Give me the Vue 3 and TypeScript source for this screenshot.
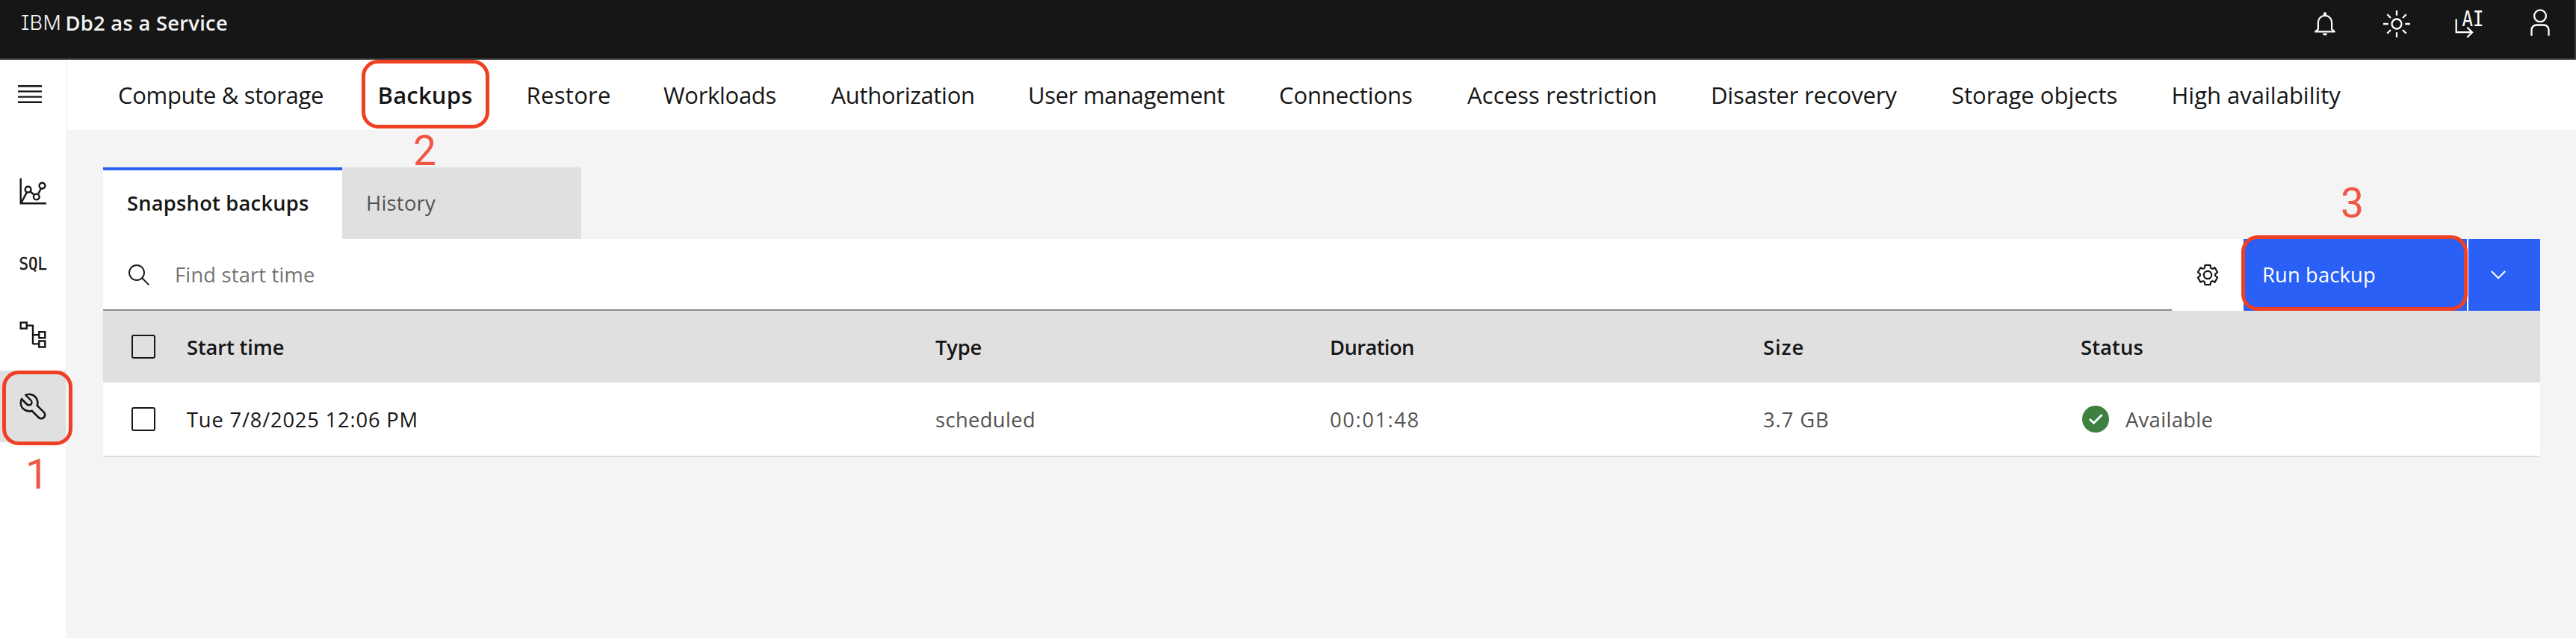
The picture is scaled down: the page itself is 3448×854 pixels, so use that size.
<script setup lang="ts">
interface NavItem {
  label: string
  width: number
  spacing: number
  active?: boolean
}

interface Cell {
  text: string
  spacing: number
}

interface BackupRow {
  start: Cell
  type: Cell
  duration: Cell
  size: Cell
  status: Cell
}

const navItems: NavItem[] = [
  { label: 'Compute & storage', width: 347.5, spacing: -0.33 },
  { label: 'Backups', width: 199, spacing: 0.2, active: true },
  { label: 'Restore', width: 183.5, spacing: 0.32 },
  { label: 'Workloads', width: 224.4, spacing: -0.3 },
  { label: 'Authorization', width: 263.6, spacing: -0.29 },
  { label: 'User management', width: 336, spacing: -0.32 },
  { label: 'Connections', width: 252, spacing: -0.1 },
  { label: 'Access restriction', width: 326, spacing: 0.12 },
  { label: 'Disaster recovery', width: 322, spacing: -0.13 },
  { label: 'Storage objects', width: 294.5, spacing: -0.01 },
  { label: 'High availability', width: 230, spacing: 0 },
]

const headers: Cell[] = [
  { text: 'Start time', spacing: -0.12 },
  { text: 'Type', spacing: -0.14 },
  { text: 'Duration', spacing: -0.58 },
  { text: 'Size', spacing: 0.9 },
  { text: 'Status', spacing: 0.15 },
]

const rows: BackupRow[] = [
  {
    start: { text: 'Tue 7/8/2025 12:06 PM', spacing: 0.82 },
    type: { text: 'scheduled', spacing: 0.4 },
    duration: { text: '00:01:48', spacing: 1.6 },
    size: { text: '3.7 GB', spacing: 0.94 },
    status: { text: 'Available', spacing: 0.36 },
  },
]

const track = (spacing: number) => ({ letterSpacing: `${spacing}px` })

// Outline of a six-toothed gear centred on (16, 16)
function gearOutline(): string {
  const point = (radius: number, degrees: number) => {
    const a = (degrees * Math.PI) / 180
    return `${(16 + radius * Math.cos(a)).toFixed(2)} ${(16 + radius * Math.sin(a)).toFixed(2)}`
  }
  let d = ''
  for (let k = 0; k < 6; k++) {
    const mid = k * 60 - 90
    d += `${k ? 'L' : 'M'}${point(13.6, mid - 15)}L${point(13.6, mid + 15)}`
    d += `L${point(10.6, mid + 22)}Q${point(9.4, mid + 30)} ${point(10.6, mid + 38)}`
  }
  return d + 'Z'
}
const gear = gearOutline()
</script>

<template>
  <div class="page">
    <header class="topbar">
      <div class="brand"><span class="ibm">IBM</span><span class="product">Db2 as a Service</span></div>
      <div class="tools">
        <button class="tool" aria-label="Notifications">
          <svg viewBox="0 0 40 40" fill="none" stroke="#fff" stroke-width="2.2" stroke-linejoin="round">
            <path d="M10.9 27V18a9.100 9.100 0 0 1 18.200 0V27L32.800 30.400H7.200Z" />
            <path d="M17 32.500H23a3 3 0 0 1-6 0Z" fill="#fff" stroke="none" />
            <path d="M18 9V6.200a2 2 0 0 1 4 0V9Z" fill="#fff" stroke="none" />
          </svg>
        </button>
        <button class="tool" aria-label="Theme">
          <svg viewBox="0 0 40 40" fill="none" stroke="#fff" stroke-width="2.3">
            <circle cx="20" cy="20" r="6.500" />
            <path d="M20 2V8.700M20 31.300V38M2 20H8.700M31.300 20H38M7.300 7.300L12 12M28 28L32.700 32.700M7.300 32.700L12 28M28 12L32.700 7.300" />
          </svg>
        </button>
        <button class="tool" aria-label="AI assistant">
          <svg viewBox="0 0 40 40" fill="none" stroke="#fff" stroke-width="2.3">
            <path d="M3.700 13.500V31.200H25M18.300 24.500L25 31.200L18.300 38" />
            <text class="ai" x="11.500" y="22.500" textLength="29" lengthAdjust="spacingAndGlyphs">AI</text>
          </svg>
        </button>
        <button class="tool" aria-label="Account">
          <svg viewBox="0 0 40 40" fill="none" stroke="#fff" stroke-width="2.300">
            <circle cx="20" cy="9.300" r="7.900" />
            <path d="M8.500 35.700V28a6.500 6.500 0 0 1 6.500-6.500H25A6.500 6.500 0 0 1 31.500 28V35.700" />
          </svg>
        </button>
      </div>
    </header>

    <div class="body">
      <aside class="rail">
        <button class="rail-menu" aria-label="Menu">
          <svg viewBox="0 0 32 24" fill="#161616">
            <path d="M0 0H32V2.400H0ZM0 7.200H32V9.600H0ZM0 14.400H32V16.800H0ZM0 21.600H32V24H0Z" />
          </svg>
        </button>
        <button class="rail-item" aria-label="Monitoring">
          <svg viewBox="0 0 40 40" fill="none" stroke="#161616" stroke-width="2.400">
            <path d="M3.700 2.500V36.300H38M4.500 35.500L11.700 21.600M16.700 20.500L22 25.200M27.300 23.300L30.700 16.700" />
            <circle cx="13.600" cy="17.700" r="3.900" />
            <circle cx="24.800" cy="27.500" r="3.900" />
            <circle cx="32.500" cy="12.600" r="3.900" />
          </svg>
        </button>
        <button class="rail-item" aria-label="SQL">
          <svg viewBox="0 0 40 40">
            <text class="sql" x="1.500" y="28.600" textLength="37.500" lengthAdjust="spacingAndGlyphs">SQL</text>
          </svg>
        </button>
        <button class="rail-item" aria-label="Schema">
          <svg viewBox="0 0 40 40" fill="none" stroke="#161616" stroke-width="2.400">
            <path d="M3.700 3.700H11.700V11.700H3.700ZM28.300 16.200H36.300V24.200H28.300ZM28.300 28.500H36.300V36.500H28.300Z" />
            <path d="M11.700 7.700H20V30.700A1.700 1.700 0 0 0 21.700 32.400H28.300M20 20.200H28.300" />
          </svg>
        </button>
        <button class="rail-item active" aria-label="Administration">
          <svg viewBox="0 0 32 32" fill="#161616">
            <path d="M12.100 2a9.800 9.800 0 0 0-5.400 1.600l6.400 6.400a2.100 2.100 0 0 1 .2 3 2.100 2.100 0 0 1-3-.2L3.700 6.400A9.840 9.840 0 0 0 2 12.100 10.140 10.140 0 0 0 12.100 22.200a10.900 10.900 0 0 0 2.600-.3l6.700 6.700a5 5 0 0 0 7.100-7.100l-6.700-6.700a10.900 10.900 0 0 0 .3-2.600A10 10 0 0 0 12.100 2Zm8 10.100a7.610 7.610 0 0 1-.3 2.100l-.3 1.100.8.8 6.700 6.700a2.880 2.880 0 0 1 .9 2.100A2.720 2.720 0 0 1 27 27a2.900 2.900 0 0 1-4.200 0l-6.700-6.700-.8-.8-1.100.3a7.610 7.610 0 0 1-2.100.3 8.270 8.270 0 0 1-5.700-2.300A7.630 7.630 0 0 1 4 12.100a8.330 8.330 0 0 1 .3-2.200l4.400 4.400a4.140 4.140 0 0 0 5.900.2 4.140 4.140 0 0 0-.2-5.900L10 4.200a6.450 6.450 0 0 1 2-.3 8.270 8.270 0 0 1 5.700 2.300A8.490 8.490 0 0 1 20.100 12.100Z" />
          </svg>
        </button>
      </aside>

      <div class="main">
        <nav class="nav">
          <a
            v-for="item in navItems"
            :key="item.label"
            class="nav-item"
            :class="{ active: item.active }"
            :style="{ width: `${item.width}px`, letterSpacing: `${item.spacing}px` }"
          >{{ item.label }}</a>
        </nav>

        <section class="content">
          <div class="tabs">
            <div class="tab selected">Snapshot backups</div>
            <div class="tab">History</div>
          </div>

          <div class="toolbar">
            <div class="search">
              <svg class="search-icon" viewBox="0 0 28 28" fill="none" stroke="#161616" stroke-width="1.900">
                <circle cx="11" cy="11" r="10" />
                <path d="M18 18L27.300 27.300" />
              </svg>
              <span class="placeholder">Find start time</span>
            </div>
            <button class="settings" aria-label="Settings">
              <svg viewBox="0 0 32 32" fill="none" stroke="#161616" stroke-width="2.200" stroke-linejoin="round">
                <path :d="gear" />
                <circle cx="16" cy="16" r="5.200" />
              </svg>
            </button>
            <button class="run">Run backup</button>
            <button class="more" aria-label="More backup options">
              <svg viewBox="0 0 20 12" fill="none" stroke="#fff" stroke-width="2">
                <path d="M.8 1L10 10.300L19.200 1" />
              </svg>
            </button>
          </div>

          <div class="table">
            <div class="row head">
              <span class="check"></span>
              <span v-for="h in headers" :key="h.text" :style="track(h.spacing)">{{ h.text }}</span>
            </div>
            <div v-for="r in rows" :key="r.start.text" class="row data">
              <span class="check"></span>
              <span class="start" :style="track(r.start.spacing)">{{ r.start.text }}</span>
              <span :style="track(r.type.spacing)">{{ r.type.text }}</span>
              <span :style="track(r.duration.spacing)">{{ r.duration.text }}</span>
              <span :style="track(r.size.spacing)">{{ r.size.text }}</span>
              <span class="status" :style="track(r.status.spacing)">
                <svg viewBox="0 0 36 36">
                  <circle cx="18" cy="18" r="18" fill="#3d8040" />
                  <path d="M10 18L15.500 23.300L26.500 12.300" fill="none" stroke="#fff" stroke-width="2.800" />
                </svg>
                {{ r.status.text }}
              </span>
            </div>
          </div>
        </section>
      </div>
    </div>

    <div class="mark mark-1"></div>
    <div class="mark mark-2"></div>
    <div class="mark mark-3"></div>
    <div class="num num-1">1</div>
    <div class="num num-2">2</div>
    <div class="num num-3">3</div>
  </div>
</template>

<style>
body {
  background: #f4f4f4;
}
</style>

<style scoped>
.page {
  position: relative;
  width: 3448px;
  height: 854px;
  overflow: hidden;
  display: flex;
  flex-direction: column;
  background: #f4f4f4;
  color: #161616;
  font-family: 'Open Sans', 'Noto Sans', sans-serif;
  font-size: 27.3px;
  white-space: nowrap;
}
button {
  border: 0;
  padding: 0;
  margin: 0;
  background: none;
  font: inherit;
  display: flex;
  align-items: center;
  justify-content: center;
}
svg {
  display: block;
  overflow: visible;
}
.topbar {
  flex: none;
  box-sizing: border-box;
  height: 80px;
  display: flex;
  justify-content: space-between;
  background: #161616;
  border-bottom: 2px solid #393939;
}
.brand {
  height: 61px;
  padding-left: 28px;
  display: flex;
  line-height: 61px;
  color: #f4f4f4;
}
.ibm {
  width: 59.5px;
  font-family: Inter, sans-serif;
  font-size: 27px;
  font-weight: 300;
  font-feature-settings: 'cv08';
  letter-spacing: 0.3px;
}
.product {
  font-weight: 600;
  letter-spacing: 0.29px;
}
.tools {
  display: flex;
  border-right: 2px solid #393939;
}
.tool {
  width: 96px;
  height: 64px;
}
.tool:last-child {
  width: 94px;
  padding-left: 2px;
  box-sizing: border-box;
}
.tool svg,
.rail-item svg {
  width: 40px;
  height: 40px;
}
.ai {
  font-family: 'DejaVu Sans Mono', monospace;
  font-size: 27.5px;
  fill: #fff;
  stroke: none;
}
.sql {
  font-family: 'DejaVu Sans Mono', monospace;
  font-size: 23.5px;
  fill: #161616;
  stroke: #161616;
  stroke-width: 0.4px;
}
.body {
  flex: 1;
  display: flex;
}
.rail {
  box-sizing: border-box;
  width: 90px;
  display: flex;
  flex-direction: column;
  background: #fff;
  border-right: 2px solid #f4f4f4;
}
.rail-menu {
  height: 92px;
  margin-bottom: 36px;
  padding-left: 24px;
  justify-content: flex-start;
}
.rail-menu svg {
  width: 32px;
  height: 24px;
}
.rail-item {
  height: 96px;
}
.rail-item.active {
  background: #e0e0e0;
}
.main {
  flex: 1;
  display: flex;
  flex-direction: column;
}
.nav {
  height: 94px;
  padding-left: 68px;
  display: flex;
  background: #fff;
  font-size: 31px;
  line-height: 94px;
}
.nav-item {
  flex: none;
}
.nav-item.active {
  font-weight: 600;
}
.content {
  width: 3262px;
  margin: 50px 0 0 48px;
}
.tabs {
  display: flex;
  line-height: 95px;
}
.tab {
  box-sizing: border-box;
  width: 320px;
  height: 96px;
  padding-left: 32px;
  background: #e0e0e0;
  color: #525252;
  letter-spacing: 0.28px;
}
.tab.selected {
  background: #fff;
  border-top: 4px solid #2a60f6;
  line-height: 87px;
  color: #161616;
  font-weight: 600;
  letter-spacing: 0.22px;
}
.toolbar {
  display: flex;
  height: 96px;
  background: #fff;
}
.search {
  box-sizing: border-box;
  width: 2769px;
  padding-left: 34px;
  display: flex;
  align-items: center;
  gap: 34px;
  border-bottom: 2px solid #8d8d8d;
}
.search-icon {
  width: 28px;
  height: 28px;
  margin-top: 2px;
}
.placeholder {
  color: #737373;
  letter-spacing: 0.2px;
}
.settings {
  width: 96px;
}
.settings svg {
  width: 32px;
  height: 32px;
}
.run {
  box-sizing: border-box;
  width: 299px;
  padding: 0 0 1px 25px;
  justify-content: flex-start;
  background: #2a60f6;
  color: #fff;
  letter-spacing: 0.17px;
}
.more {
  box-sizing: border-box;
  width: 96px;
  margin-left: 2px;
  padding-right: 16px;
  background: #2a60f6;
}
.more svg {
  width: 20px;
  height: 12px;
}
.row {
  display: grid;
  grid-template-columns: 112px 1002px 528px 580px 425px 615px;
  align-items: center;
}
.head {
  height: 96px;
  background: #e0e0e0;
  font-weight: 600;
}
.data {
  height: 98px;
  background: #fff;
  border-bottom: 2px solid #e0e0e0;
  color: #525252;
}
.start {
  color: #161616;
}
.check {
  box-sizing: border-box;
  width: 32px;
  height: 32px;
  margin-left: 38px;
  border: 2px solid #161616;
  border-radius: 3px;
}
.status {
  display: flex;
  align-items: center;
  gap: 22px;
  padding-left: 2px;
}
.status svg {
  width: 36px;
  height: 36px;
}
.mark {
  position: absolute;
  box-sizing: border-box;
  border: 5px solid #ee4023;
  border-radius: 22px;
}
.mark-1 {
  left: 3px;
  top: 496px;
  width: 94px;
  height: 100px;
}
.mark-2 {
  left: 484px;
  top: 80px;
  width: 171px;
  height: 92px;
}
.mark-3 {
  left: 3000px;
  top: 315px;
  width: 303px;
  height: 101px;
}
.num {
  position: absolute;
  font-family: Roboto, 'Liberation Sans', sans-serif;
  font-size: 55px;
  line-height: 56px;
  color: #ef5646;
}
.num-1 {
  left: 34px;
  top: 607px;
}
.num-2 {
  left: 553px;
  top: 174px;
}
.num-3 {
  left: 3133px;
  top: 244px;
}
</style>
